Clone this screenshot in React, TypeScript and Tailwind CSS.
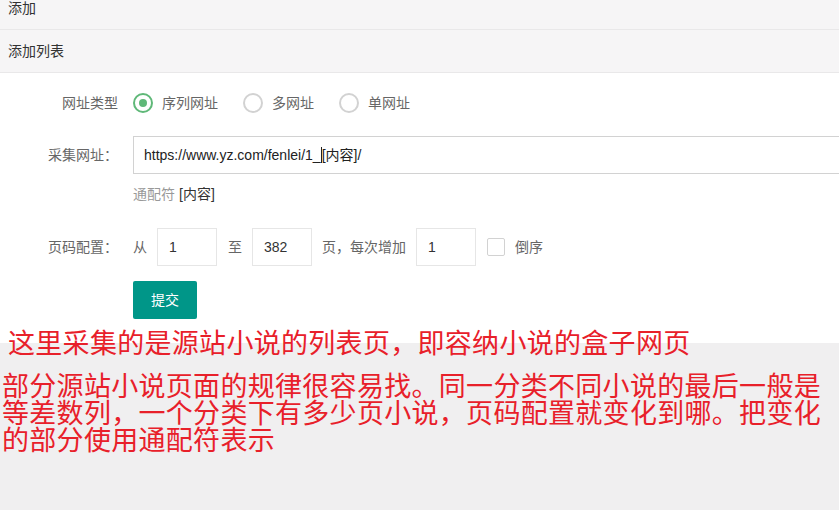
const cjk = "font-['Liberation_Sans','Noto_Sans_CJK_SC',sans-serif]";

function Radio({ label, checked }: { label: string; checked?: boolean }) {
  return (
    <div className="flex items-center mr-[25px]">
      <span
        className={`w-5 h-5 rounded-full border-2 flex items-center justify-center ${
          checked ? "border-[#5fb878]" : "border-[#d2d2d2]"
        }`}
      >
        {checked && <span className="w-2 h-2 rounded-full bg-[#5fb878]" />}
      </span>
      <span className="ml-[9px] text-[#666]">{label}</span>
    </div>
  );
}

function SmallInput({ value }: { value: string }) {
  return (
    <div className="w-[60px] h-[38px] border border-[#e6e6e6] bg-white flex items-center pl-[11px] text-[#333]">
      {value}
    </div>
  );
}

export default function App() {
  return (
    <div className={`relative w-[839px] h-[510px] overflow-hidden bg-[#f0eff0] text-[14px] ${cjk}`}>
      {/* Header rows */}
      <div className="h-[30px] bg-[#f6f5f6] border-b border-[#e9e8e9] pl-2 text-[#333] leading-[17px]">添加</div>
      <div className="h-[43px] bg-[#f6f5f6] border-b border-[#e9e8e9] pl-2 flex items-center text-[#333]">添加列表</div>

      {/* Form */}
      <div className="h-[270px] bg-white pt-[20px]">
        <div className="flex items-center h-[20px]">
          <div className="w-[118px] text-right text-[#666]">网址类型</div>
          <div className="ml-[15px] flex items-center">
            <Radio label="序列网址" checked />
            <Radio label="多网址" />
            <Radio label="单网址" />
          </div>
        </div>

        <div className="flex items-center mt-[23px]">
          <div className="w-[118px] text-right text-[#666]">采集网址：</div>
          <div className="ml-[15px] flex-1 h-[38px] border border-[#d2d2d2] border-r-0 flex items-center pl-[10px] text-[#222]">
            https://www.yz.com/fenlei/1_<span className="inline-block w-px h-[16px] bg-[#222]" />[内容]/
          </div>
        </div>

        <div className="ml-[133px] mt-[10px] h-[20px] flex items-center">
          <span className="text-[#999]">通配符</span>
          <span className="ml-1 text-[#333]">[内容]</span>
        </div>

        <div className="flex items-center mt-[24px]">
          <div className="w-[118px] text-right text-[#666]">页码配置：</div>
          <div className="ml-[15px] flex items-center text-[#666]">
            <span className="mr-[10px]">从</span>
            <SmallInput value="1" />
            <span className="ml-[11px] mr-[10px]">至</span>
            <SmallInput value="382" />
            <span className="ml-[10px] mr-[10px]">页，每次增加</span>
            <SmallInput value="1" />
            <span className="ml-[11px] w-[18px] h-[18px] border border-[#d2d2d2] rounded-[2px] bg-white" />
            <span className="ml-[10px]">倒序</span>
          </div>
        </div>

        <div className="ml-[133px] mt-[15px] w-[64px] h-[38px] rounded-[2px] bg-[#009688] text-white flex items-center justify-center">
          提交
        </div>
      </div>

      {/* Annotation */}
      <div className="absolute left-0 top-[327px] pl-[8px] text-[27px] leading-[29px] tracking-[0.3px] text-[#e8202a] font-['Noto_Sans_CJK_SC',sans-serif] whitespace-nowrap">
        这里采集的是源站小说的列表页，即容纳小说的盒子网页
      </div>
      <div className="pt-[28px] pl-[2px] text-[27px] leading-[27px] tracking-[0.3px] text-[#e8202a] font-['Noto_Sans_CJK_SC',sans-serif] whitespace-nowrap">
        <div>部分源站小说页面的规律很容易找。同一分类不同小说的最后一般是</div>
        <div>等差数列，一个分类下有多少页小说，页码配置就变化到哪。把变化</div>
        <div>的部分使用通配符表示</div>
      </div>
    </div>
  );
}
